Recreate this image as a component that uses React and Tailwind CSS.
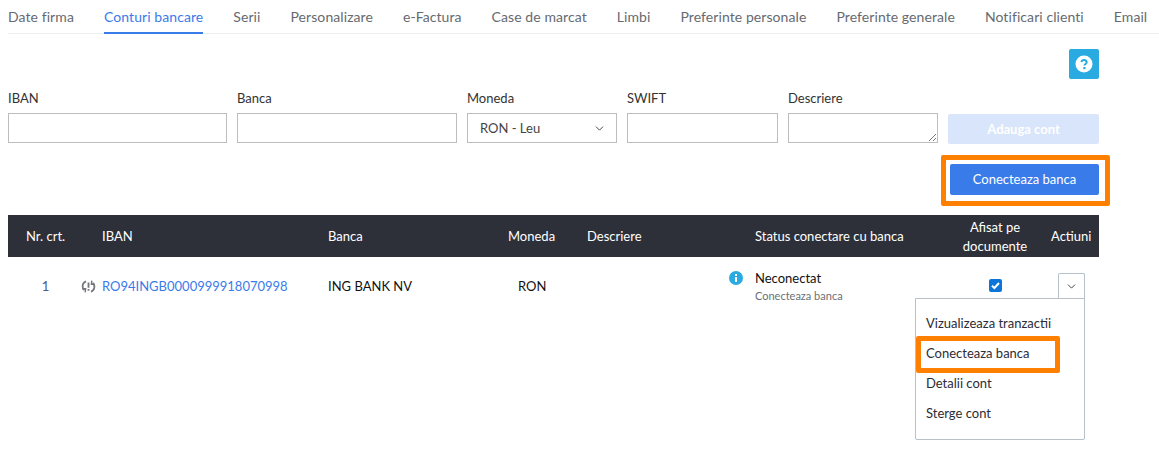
import { ChevronDown } from 'lucide-react';

const tabs = ['Date firma', 'Conturi bancare', 'Serii', 'Personalizare', 'e-Factura', 'Case de marcat', 'Limbi', 'Preferinte personale', 'Preferinte generale', 'Notificari clienti', 'Email'];
const inputClass = 'h-[30px] border border-[#bdbdbd] bg-white';

function Field({ label, className, children }) {
  return (
    <div className={className}>
      <label className="block h-[24px] pt-[1px] text-[13px] leading-[17px] text-[#333]">{label}</label>
      {children}
    </div>
  );
}

function SyncIcon() {
  return (
    <svg width="15" height="15" viewBox="0 0 15 15" fill="none" stroke="#74767b" strokeWidth="1.7" className="shrink-0">
      <path d="M5 2.4A5 5 0 0 0 3.4 11" />
      <path d="M10 12.6A5 5 0 0 0 11.6 4" />
      <path d="M1.2 9.8 L4.6 9.7 L4.2 13.4" strokeWidth="1.4" />
      <path d="M13.8 5.2 L10.4 5.3 L10.8 1.6" strokeWidth="1.4" />
      <path d="M7.5 3.4V8.8M7.5 10V11.8" strokeWidth="1.8" />
    </svg>
  );
}

function Header() {
  return (
    <div className="grid h-[42px] grid-cols-[94px_226px_180px_79px_142px_226px_80px_64px] items-center bg-[#2e3039] pt-[1px] text-[13px] text-white">
      <div className="pl-[18px]">Nr. crt.</div>
      <div>IBAN</div>
      <div>Banca</div>
      <div>Moneda</div>
      <div>Descriere</div>
      <div className="pl-[26px]">Status conectare cu banca</div>
      <div className="text-center leading-[19px]">Afisat pe<br />documente</div>
      <div className="pl-[16px]">Actiuni</div>
    </div>
  );
}

export default function App() {
  return (
    <div className="h-[467px] w-[1159px] overflow-hidden bg-white font-['Lato',sans-serif]">
      <nav className="ml-2 flex h-[34px] gap-[30px] border-b border-[#eeeeee] text-[14px] leading-[34px] tracking-[0.08px] text-[#666a70]">
        {tabs.map((tab) => (
          <a key={tab} className={tab === 'Conturi bancare' ? 'h-[34px] whitespace-nowrap border-b-2 border-[#3a7bea] text-[#3a7bea]' : 'whitespace-nowrap'}>
            {tab}
          </a>
        ))}
      </nav>

      <div className="mt-[15px] flex h-[30px] justify-end pr-[60px]">
        <button className="flex h-[30px] w-[30px] items-center justify-center rounded-[2px] bg-[#29abe2]">
          <svg width="18" height="18" viewBox="0 0 18 18">
            <circle cx="9" cy="9" r="8.5" fill="#fff" />
            <path d="M6.4 7a2.7 2.7 0 0 1 5.3.2c0 1.8-2.3 1.8-2.3 3.4" fill="none" stroke="#29abe2" strokeWidth="2" />
            <rect x="8.3" y="12" width="2.2" height="2.2" fill="#29abe2" />
          </svg>
        </button>
      </div>

      <div className="ml-2 mt-[10px] flex w-[1091px] gap-[10px]">
        <Field label="IBAN" className="w-[219px]"><div className={inputClass} /></Field>
        <Field label="Banca" className="w-[220px]"><div className={inputClass} /></Field>
        <Field label="Moneda" className="w-[150px]">
          <div className={`${inputClass} flex items-center justify-between pl-[12px] pr-[10px] pt-[1px] text-[13px] text-[#444]`}>
            RON - Leu
            <ChevronDown size={13} strokeWidth={1.8} className="text-[#444]" />
          </div>
        </Field>
        <Field label="SWIFT" className="w-[151px]"><div className={inputClass} /></Field>
        <Field label="Descriere" className="w-[150px]">
          <div className={`${inputClass} relative`}>
            <svg width="9" height="9" viewBox="0 0 9 9" className="absolute bottom-0 right-0" stroke="#777" strokeWidth="1">
              <path d="M1 8 8 1M5 8 8 5" />
            </svg>
          </div>
        </Field>
        <div className="w-[151px] pt-[25px]">
          <button className="h-[30px] w-full rounded-[2px] bg-[#d8e5fb] pt-[1px] text-[13px] font-bold text-white">Adauga cont</button>
        </div>
      </div>

      <div className="ml-2 mt-[11px] flex h-[51px] w-[1102px] justify-end">
        <div className="h-[51px] w-[169px] rounded-[2px] border-[5px] border-[#ff8000] pl-[4px] pt-[4px]">
          <button className="h-[31px] w-[149px] rounded-[2px] bg-[#3a7bea] text-[13px] text-white">Conecteaza banca</button>
        </div>
      </div>

      <div className="relative ml-2 mt-[9px] w-[1091px]">
        <Header />
        <div className="grid h-[58px] grid-cols-[94px_226px_180px_79px_142px_226px_80px_64px] items-center text-[13px] text-[#111]">
          <div className="flex items-center pt-[1px]">
            <span className="ml-[18px] w-[39px] text-center text-[#4a5a8a]">1</span>
            <span className="ml-[16px]"><SyncIcon /></span>
          </div>
          <a className="pt-[1px] text-[#3a7bea]">RO94INGB0000999918070998</a>
          <div className="pt-[1px]">ING BANK NV</div>
          <div className="pl-[10px] pt-[1px]">RON</div>
          <div />
          <div className="flex gap-[12px] pt-[2px]">
            <svg width="14" height="14" viewBox="0 0 14 14" className="mt-[2px] shrink-0">
              <circle cx="7" cy="7" r="7" fill="#29abe2" />
              <rect x="6" y="6" width="2" height="5" fill="#fff" />
              <rect x="6" y="3" width="2" height="2" fill="#fff" />
            </svg>
            <div>
              <div className="text-[13px] leading-[18px] text-[#111]">Neconectat</div>
              <div className="text-[11px] leading-[18px] text-[#6b7075]">Conecteaza banca</div>
            </div>
          </div>
          <div className="flex justify-center pb-[1px]">
            <span className="flex h-[13px] w-[13px] items-center justify-center rounded-[2px] bg-[#0b76d8]">
              <svg width="11" height="11" viewBox="0 0 11 11" fill="none" stroke="#fff" strokeWidth="2">
                <path d="M2 5.8 4.4 8 9 3" />
              </svg>
            </span>
          </div>
          <div className="self-start pl-[23px] pt-[16px]">
            <button className="flex h-[26px] w-[27px] items-center justify-center rounded-t-[2px] border border-b-0 border-[#b8c0c8] bg-white">
              <ChevronDown size={13} strokeWidth={1.8} className="text-[#444]" />
            </button>
          </div>
        </div>

        <div className="absolute left-[907px] top-[83px] h-[142px] w-[170px] rounded-b-[2px] border border-[#b8c0c8] bg-white py-[10px] text-[13px] text-[#2c2c36]">
          <div className="flex h-[30px] items-center pl-[10px]">Vizualizeaza tranzactii</div>
          <div className="flex h-[30px] items-center pl-[10px]">Conecteaza banca</div>
          <div className="flex h-[30px] items-center pl-[10px]">Detalii cont</div>
          <div className="flex h-[30px] items-center pl-[10px]">Sterge cont</div>
          <div className="absolute left-0 top-[37px] h-[37px] w-[144px] rounded-[2px] border-[5px] border-[#ff8000]" />
        </div>
      </div>
    </div>
  );
}
